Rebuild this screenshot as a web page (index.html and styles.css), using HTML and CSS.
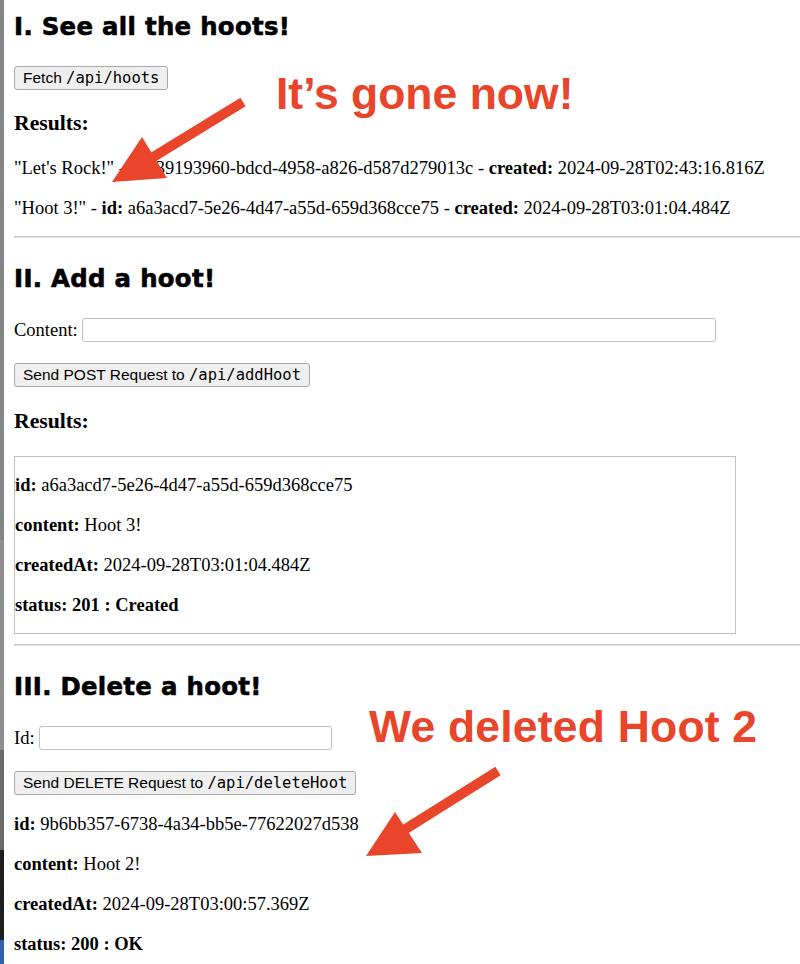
FILE: index.html
```html
<!DOCTYPE html>
<html lang="en">
<head>
<meta charset="utf-8">
<title>Hoots</title>
<link rel="stylesheet" href="styles.css">
</head>
<body>
<section class="sec sec-1">
  <h2 class="title">I. See all the hoots!</h2>
  <button class="btn btn-fetch" type="button">Fetch <code>/api/hoots</code></button>
  <h3 class="results">Results:</h3>
  <p class="line line-first">"Let's Rock!" - <b>id:</b> 39193960-bdcd-4958-a826-d587d279013c - <b>created:</b> 2024-09-28T02:43:16.816Z</p>
  <p class="line">"Hoot 3!" - <b>id:</b> a6a3acd7-5e26-4d47-a55d-659d368cce75 - <b>created:</b> 2024-09-28T03:01:04.484Z</p>
</section>
<hr class="rule rule-1">
<section class="sec sec-2">
  <h2 class="title">II. Add a hoot!</h2>
  <div class="field"><label for="content">Content:</label> <input id="content" class="input input-wide" type="text"></div>
  <button class="btn btn-post" type="button">Send POST Request to <code>/api/addHoot</code></button>
  <h3 class="results results-2">Results:</h3>
  <div class="box">
    <p class="line"><b>id:</b> a6a3acd7-5e26-4d47-a55d-659d368cce75</p>
    <p class="line"><b>content:</b> Hoot 3!</p>
    <p class="line"><b>createdAt:</b> 2024-09-28T03:01:04.484Z</p>
    <p class="line"><b>status: 201 : Created</b></p>
  </div>
</section>
<hr class="rule rule-2">
<section class="sec sec-3">
  <h2 class="title">III. Delete a hoot!</h2>
  <div class="field"><label for="hootid">Id:</label> <input id="hootid" class="input input-id" type="text"></div>
  <button class="btn btn-delete" type="button">Send DELETE Request to <code>/api/deleteHoot</code></button>
  <p class="line line-del"><b>id:</b> 9b6bb357-6738-4a34-bb5e-77622027d538</p>
  <p class="line"><b>content:</b> Hoot 2!</p>
  <p class="line"><b>createdAt:</b> 2024-09-28T03:00:57.369Z</p>
  <p class="line"><b>status: 200 : OK</b></p>
</section>

<div class="note note-1">It’s gone now!</div>
<div class="note note-2">We deleted Hoot 2</div>
<svg class="arrows" width="800" height="964" viewBox="0 0 800 964" aria-hidden="true">
  <line x1="243" y1="102" x2="150" y2="159" stroke="#e8452a" stroke-width="10"/>
  <polygon points="142,137 167,178 112,182" fill="#e8452a"/>
  <line x1="498" y1="771" x2="404" y2="830" stroke="#e8452a" stroke-width="10"/>
  <polygon points="395,812 422,853 366,856" fill="#e8452a"/>
</svg>
</body>
</html>
```
FILE: styles.css
```css
html {
  background:
    linear-gradient(to bottom,
      #858585 0 540px,
      #8f8f8f 540px 750px,
      #6a6a6a 750px 850px,
      #1f1f1f 850px 940px,
      #2f63b0 940px) 0 0 / 4px 964px no-repeat,
    #ffffff;
}

body {
  margin: 0;
  padding: 0 0 0 14px;
  position: relative;
  font-family: "Liberation Serif", "Times New Roman", serif;
  font-size: 18.5px;
  color: #000;
  min-height: 964px;
  box-sizing: border-box;
}

.sec {
  display: flow-root;
}

.title {
  font-family: "DejaVu Sans", Verdana, sans-serif;
  font-weight: bold;
  font-size: 24.4px;
  line-height: 30px;
  height: 30px;
  margin: 26px 0 0;
  letter-spacing: 0.3px;
  -webkit-text-stroke: 0.6px #000;
}

.sec-1 .title {
  margin-top: 12px;
}

.btn {
  display: block;
  box-sizing: border-box;
  height: 24px;
  margin: 21px 0 0;
  padding: 0 8px;
  font-family: "Liberation Sans", Arial, sans-serif;
  font-size: 15.5px;
  line-height: 22px;
  color: #000;
  background: #efefef;
  border: 1px solid #a9a9a9;
  border-radius: 3px;
}

.btn-fetch {
  margin-top: 24px;
}

.btn code {
  font-family: "DejaVu Sans Mono", "Liberation Mono", monospace;
  font-size: 15.5px;
}

.results {
  font-size: 21.7px;
  font-weight: bold;
  line-height: 24px;
  margin: 21px 0 0;
}

.results-2 {
  margin-top: 22px;
}

.line {
  margin: 16px 0 0;
  line-height: 24px;
  white-space: nowrap;
}

.line-first {
  margin-top: 20.5px;
}

.line-del {
  margin-top: 17.5px;
}

.rule {
  margin: 16.5px 0 0;
  height: 0;
  border: 0;
  border-top: 1px solid #c4c4c4;
  border-bottom: 1px solid #e4e4e4;
}

.rule-2 {
  margin-top: 9.5px;
}

.field {
  height: 24px;
  line-height: 24px;
  margin-top: 24px;
  white-space: nowrap;
}

.input {
  box-sizing: border-box;
  height: 24px;
  margin: 0;
  vertical-align: top;
  border: 1px solid #c2c2c2;
  border-radius: 3px;
  background: #fff;
  font-size: 13px;
}

.input-wide {
  width: 634px;
}

.input-id {
  width: 293px;
}

.box {
  margin-top: 23px;
  width: 722px;
  box-sizing: border-box;
  border: 1px solid #c0c0c0;
  padding: 0 0 16px;
}

.note {
  position: absolute;
  font-family: "Liberation Sans", Arial, sans-serif;
  font-weight: bold;
  font-size: 44.5px;
  line-height: 44px;
  color: #e8452a;
  white-space: nowrap;
}

.note-1 {
  left: 276px;
  top: 72px;
}

.note-2 {
  left: 369px;
  top: 705px;
  letter-spacing: 0.2px;
}

.arrows {
  position: absolute;
  left: 0;
  top: 0;
  pointer-events: none;
}
```
